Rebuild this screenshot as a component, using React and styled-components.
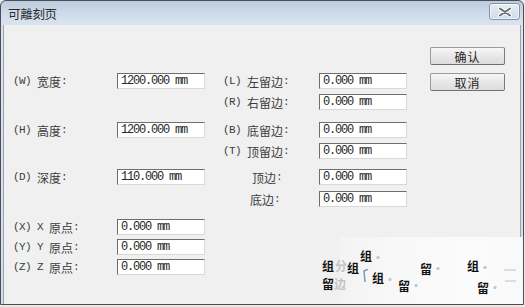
import React from "react";
import styled, { createGlobalStyle } from "styled-components";

const Global = createGlobalStyle`
  html, body { margin: 0; padding: 0; background: #e9e9e9; }
  body { width: 525px; height: 307px; overflow: hidden; font-family: "Noto Sans CJK SC", sans-serif; }
`;

const Window = styled.div`
  position: relative;
  width: 522px;
  height: 303px;
  border: 1px solid #4b4f55;
  border-radius: 6px 6px 0 0;
  background: linear-gradient(#bccddf 0px, #cddbea 12px, #d9e4f0 24px, #d4dfeb 100%);
  display: flex;
  flex-direction: column;
  overflow: hidden;
`;

const TitleBar = styled.div`
  height: 24px;
  display: flex;
  align-items: center;
  justify-content: space-between;
  padding: 0 3px 0 7px;
  flex-shrink: 0;
`;

const Title = styled.span`
  font-size: 12.5px;
  color: #2a2a2a;
  letter-spacing: -0.3px;
  margin-top: 1px;
`;

const CloseBtn = styled.div`
  width: 29px;
  height: 15px;
  border: 1px solid #8594a6;
  border-radius: 3px;
  background: linear-gradient(#e6edf5, #cfdbe8);
  box-shadow: inset 0 0 0 1px rgba(255, 255, 255, 0.6);
  display: flex;
  align-items: center;
  justify-content: center;
  margin-top: -3px;
`;

const Body = styled.div`
  flex: 1;
  margin: 0 2px 0 2px;
  background: #f0f0f0;
  border-left: 1px solid #9aa3ad;
  border-right: 1px solid #9aa3ad;
  display: flex;
  padding: 22px 15px 0 9px;
`;

const Form = styled.div`
  margin-top: 26px;
  display: grid;
  grid-template-columns: 104px 88px 18px 96px 88px;
  grid-template-rows: 21px 28px 21px 26px 22px 28px 20px 20px 16px;
  align-items: start;
`;

const Mono = styled.span`
  font-family: "Liberation Mono", monospace;
  font-size: 11px;
  letter-spacing: -0.6px;
  white-space: pre;
`;

const LabelBox = styled.div`
  grid-column: ${(p) => p.$col};
  height: 16px;
  display: flex;
  align-items: center;
  font-size: 12px;
  color: #3c3c3c;
  padding-left: ${(p) => p.$indent || 0}px;
  white-space: pre;
`;

const Field = styled.div`
  grid-column: ${(p) => p.$col};
  box-sizing: border-box;
  width: 88px;
  height: 16px;
  background: #fff;
  border-top: 1px solid #6e6e6e;
  border-left: 1px solid #6e6e6e;
  border-right: 1px solid #d9d9d9;
  border-bottom: 1px solid #d9d9d9;
  font-family: "Liberation Mono", monospace;
  font-size: 12px;
  letter-spacing: -1.2px;
  color: #262626;
  padding-left: 3px;
  line-height: 14px;
  white-space: pre;
`;

const Spacer = styled.div`
  grid-column: 1 / 3;
`;

const Buttons = styled.div`
  margin-left: auto;
  display: flex;
  flex-direction: column;
  gap: 8px;
`;

const Button = styled.div`
  box-sizing: border-box;
  width: 75px;
  height: 18px;
  border: 1px solid #9a9a9a;
  border-bottom-color: #6f6f6f;
  border-right-color: #7a7a7a;
  border-radius: 2px;
  background: linear-gradient(#f6f6f6, #e8e8e8 50%, #dcdcdc);
  display: flex;
  align-items: center;
  justify-content: center;
  font-size: 12px;
  color: #262626;
  letter-spacing: 1px;
`;

const Smudge = styled.div`
  position: absolute;
  left: 339px;
  top: 236px;
  width: 183px;
  height: 67px;
  background: linear-gradient(90deg, #f3f3f3 0%, #f8f8f8 30%, #fbfbfb 70%, #f9f9f9 100%);
`;

const Glyph = styled.span`
  position: absolute;
  font-size: 12px;
  line-height: 12px;
  font-weight: 700;
  color: ${(p) => (p.$faint ? "#c4c4c4" : "#121212")};
  white-space: pre;
`;

const Mark = styled.svg`
  position: absolute;
`;

function Label({ col, k, t, indent }) {
  return (
    <LabelBox $col={col} $indent={indent}>
      {k && <Mono>{k + " "}</Mono>}
      {t}
      <Mono>:</Mono>
    </LabelBox>
  );
}

const glyphs = [
  { x: 321, y: 259, t: "组" },
  { x: 334, y: 259, t: "分", faint: true },
  { x: 346, y: 261, t: "组" },
  { x: 359, y: 249, t: "组" },
  { x: 371, y: 251, t: "·", faint: true },
  { x: 371, y: 271, t: "组" },
  { x: 383, y: 273, t: "·", faint: true },
  { x: 321, y: 277, t: "留" },
  { x: 333, y: 277, t: "边", faint: true },
  { x: 397, y: 279, t: "留" },
  { x: 409, y: 279, t: "·", faint: true },
  { x: 419, y: 262, t: "留" },
  { x: 431, y: 262, t: "·", faint: true },
  { x: 466, y: 259, t: "组" },
  { x: 478, y: 261, t: "·", faint: true },
  { x: 476, y: 281, t: "留" },
  { x: 488, y: 281, t: "·", faint: true },
];

export default function App() {
  return (
    <>
      <Global />
      <Window>
        <TitleBar>
          <Title>可離刻页</Title>
          <CloseBtn>
            <svg width="14" height="10" viewBox="0 0 14 10">
              <path d="M2 1.5 L12 8.5 M12 1.5 L2 8.5" stroke="#ffffff" strokeWidth="4" strokeLinecap="round" />
              <path d="M2 1.5 L12 8.5 M12 1.5 L2 8.5" stroke="#6a6f76" strokeWidth="2" strokeLinecap="round" />
            </svg>
          </CloseBtn>
        </TitleBar>
        <Body>
          <Form>
            <Label col={1} k="(W)" t="宽度" />
            <Field $col={2}>1200.000 mm</Field>
            <Label col={4} k="(L)" t="左留边" />
            <Field $col={5}>0.000 mm</Field>

            <Spacer />
            <Label col={4} k="(R)" t="右留边" />
            <Field $col={5}>0.000 mm</Field>

            <Label col={1} k="(H)" t="高度" />
            <Field $col={2}>1200.000 mm</Field>
            <Label col={4} k="(B)" t="底留边" />
            <Field $col={5}>0.000 mm</Field>

            <Spacer />
            <Label col={4} k="(T)" t="顶留边" />
            <Field $col={5}>0.000 mm</Field>

            <Label col={1} k="(D)" t="深度" />
            <Field $col={2}>110.000 mm</Field>
            <Label col={4} t="顶边" indent={29} />
            <Field $col={5}>0.000 mm</Field>

            <Spacer />
            <Label col={4} t="底边" indent={27} />
            <Field $col={5}>0.000 mm</Field>

            <Label col={1} k="(X) X" t="原点" />
            <Field $col={2}>0.000 mm</Field>

            <Label col={1} k="(Y) Y" t="原点" />
            <Field $col={2}>0.000 mm</Field>

            <Label col={1} k="(Z) Z" t="原点" />
            <Field $col={2}>0.000 mm</Field>
          </Form>
          <Buttons>
            <Button>确认</Button>
            <Button>取消</Button>
          </Buttons>
        </Body>
        <Smudge />
        {glyphs.map((g, i) => (
          <Glyph key={i} $faint={g.faint} style={{ left: g.x, top: g.y }}>
            {g.t}
          </Glyph>
        ))}
        <Mark width="6" height="14" style={{ left: 362, top: 268 }} viewBox="0 0 6 14">
          <path d="M5 0 L1 2 L2 13" stroke="#7f98b4" strokeWidth="1.5" fill="none" />
        </Mark>
        <Mark width="14" height="16" style={{ left: 502, top: 266 }} viewBox="0 0 14 16">
          <path d="M1 3 H13 M2 14 H13" stroke="#b8c4d2" strokeWidth="1.2" />
        </Mark>
      </Window>
    </>
  );
}
